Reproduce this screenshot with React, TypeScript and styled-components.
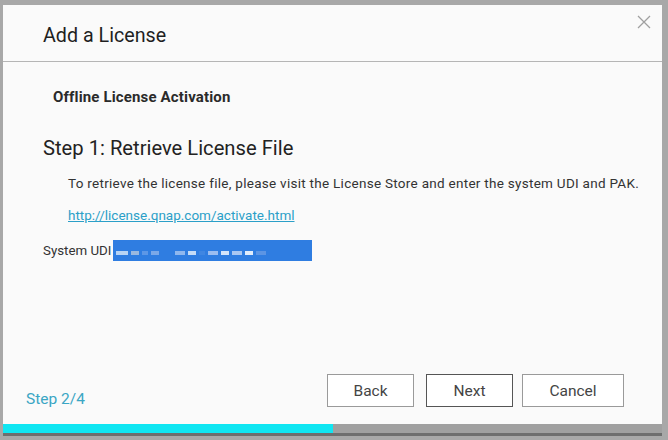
import React from "react";
import styled, { createGlobalStyle } from "styled-components";

const Global = createGlobalStyle`
  html, body { margin: 0; padding: 0; }
  body {
    width: 668px; height: 440px; overflow: hidden;
    background: #a3a3a3;
    font-family: Roboto, "Noto Sans", "Liberation Sans", sans-serif;
  }
`;

const Frame = styled.div`
  width: 668px;
  height: 440px;
  box-sizing: border-box;
  padding: 5px 6px 4px 3px;
  display: flex;
  background: #a8a8a8;
`;

const Dialog = styled.div`
  flex: 1;
  min-width: 0;
  display: flex;
  flex-direction: column;
  background: #fafafa;
  border-bottom: 3px solid #6e6e6e;
`;

const Header = styled.div`
  height: 56px;
  display: flex;
  align-items: center;
  padding: 0 14px 0 40px;
  border-bottom: 1px solid #b5b5b5;
  position: relative;
`;

const Title = styled.div`
  font-size: 19.7px;
  color: #1f1f1f;
  padding-top: 4px;
`;

const Close = styled.button`
  position: absolute;
  right: 10px;
  top: 9px;
  width: 16px;
  height: 16px;
  padding: 0;
  border: none;
  background: none;
  display: flex;
`;

const Body = styled.div`
  flex: 1;
  min-width: 0;
  display: flex;
  flex-direction: column;
  padding: 26px 20px 0 40px;
`;

const Section = styled.div`
  font-size: 15px;
  font-weight: 700;
  color: #2a2a2a;
  padding-left: 10px;
  line-height: 18px;
  letter-spacing: 0.15px;
`;

const StepTitle = styled.div`
  font-size: 20.2px;
  color: #222;
  margin-top: 30px;
  line-height: 24px;
`;

const Para = styled.div`
  font-size: 13.5px;
  color: #333;
  margin-top: 15px;
  padding-left: 25px;
  line-height: 16px;
  letter-spacing: 0.28px;
  white-space: nowrap;
`;

const Link = styled.a`
  font-size: 13.5px;
  color: #2b9fc8;
  text-decoration: underline;
  margin-top: 16px;
  margin-left: 25px;
  line-height: 16px;
  align-self: flex-start;
`;

const UdiRow = styled.div`
  display: flex;
  align-items: center;
  gap: 2px;
  margin-top: 17px;
  font-size: 13.3px;
  color: #333;
`;

const UdiBox = styled.div`
  width: 199px;
  height: 21px;
  background: #2f7de1;
  display: flex;
  align-items: center;
  gap: 3px;
  padding-left: 3px;
  box-sizing: border-box;
`;

const Blip = styled.span<{ $w: number; $c: string }>`
  display: inline-block;
  width: ${(p) => p.$w}px;
  height: 4px;
  background: ${(p) => p.$c};
  margin-top: 4px;
`;

const Footer = styled.div`
  height: 50px;
  display: flex;
  align-items: flex-start;
  justify-content: space-between;
  padding: 0 38px 0 23px;
`;

const StepLabel = styled.div`
  font-size: 15.5px;
  color: #3aa6c4;
  margin-top: 16px;
`;

const Buttons = styled.div`
  display: flex;
  gap: 12px;
`;

const Btn = styled.button<{ $w: number; $primary?: boolean; $gap?: number }>`
  width: ${(p) => p.$w}px;
  height: 33px;
  margin-left: ${(p) => p.$gap ?? 0}px;
  background: #fff;
  border: 1px solid ${(p) => (p.$primary ? "#555" : "#9a9a9a")};
  font-family: Roboto, "Noto Sans", sans-serif;
  font-size: 15.5px;
  color: #444;
  padding: 0;
`;

const Progress = styled.div`
  height: 9px;
  display: flex;
  background: #a0a0a0;
`;

const Fill = styled.div`
  height: 100%;
  background: #10e6f2;
`;

const blips: [number, string][] = [
  [12, "#b8d4f4"], [8, "#9ab8df"], [6, "#5d97e6"], [8, "#7aa8e8"], [10, "#2f7de1"], [10, "#8fb7ee"],
  [8, "#c5dcf7"], [6, "#3f86e2"], [10, "#9bbdf0"], [8, "#d3e4fa"], [10, "#a9c7f2"], [8, "#e0ecfb"], [10, "#5c95e4"],
];

export default function App() {
  return (
    <>
      <Global />
      <Frame>
        <Dialog>
          <Header>
            <Title>Add a License</Title>
            <Close aria-label="close">
              <svg width="16" height="16" viewBox="0 0 16 16">
                <path d="M2 2 L14 14 M14 2 L2 14" stroke="#a0a0a0" strokeWidth="1.3" fill="none" />
              </svg>
            </Close>
          </Header>
          <Body>
            <Section>Offline License Activation</Section>
            <StepTitle>Step 1: Retrieve License File</StepTitle>
            <Para>
              To retrieve the license file, please visit the License Store and enter the system UDI and PAK.
            </Para>
            <Link href="#">http://license.qnap.com/activate.html</Link>
            <UdiRow>
              System UDI
              <UdiBox>
                {blips.map(([w, c], i) => (
                  <Blip key={i} $w={w} $c={c} />
                ))}
              </UdiBox>
            </UdiRow>
          </Body>
          <Footer>
            <StepLabel>Step 2/4</StepLabel>
            <Buttons>
              <Btn $w={87}>Back</Btn>
              <Btn $w={87} $primary>Next</Btn>
              <Btn $w={102} $gap={-3}>Cancel</Btn>
            </Buttons>
          </Footer>
          <Progress>
            <Fill style={{ width: `${(330 / 659) * 100}%` }} />
          </Progress>
        </Dialog>
      </Frame>
    </>
  );
}
